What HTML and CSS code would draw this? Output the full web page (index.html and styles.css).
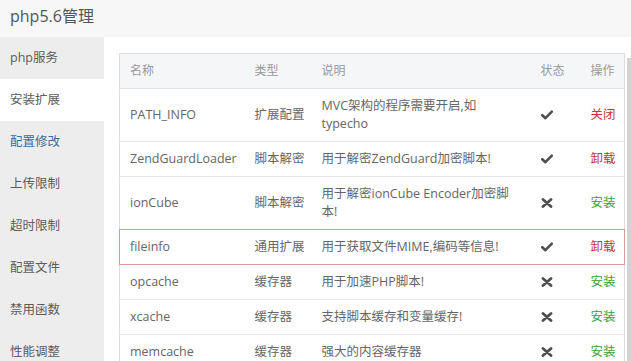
FILE: index.html
```html
<!DOCTYPE html>
<html lang="zh">
<head>
<meta charset="utf-8">
<title>php5.6管理</title>
<link rel="stylesheet" href="styles.css">
</head>
<body>
<div class="header">php5.6管理</div>
<div class="layout">
  <ul class="sidebar">
    <li>php服务</li>
    <li class="active">安装扩展</li>
    <li class="link">配置修改</li>
    <li>上传限制</li>
    <li>超时限制</li>
    <li>配置文件</li>
    <li>禁用函数</li>
    <li>性能调整</li>
  </ul>
  <div class="main">
    <table class="ext">
      <colgroup>
        <col class="c1"><col class="c2"><col class="c3"><col class="c4"><col class="c5">
      </colgroup>
      <thead>
        <tr><th>名称</th><th>类型</th><th>说明</th><th>状态</th><th>操作</th></tr>
      </thead>
      <tbody>
        <tr>
          <td>PATH_INFO</td><td>扩展配置</td><td class="desc">MVC架构的程序需要开启,如typecho</td>
          <td><svg class="ico" viewBox="0 0 12 10"><path d="M1.3 5.2 L4.4 8.2 L10.8 1.6" /></svg></td>
          <td class="red">关闭</td>
        </tr>
        <tr>
          <td>ZendGuardLoader</td><td>脚本解密</td><td class="desc">用于解密ZendGuard加密脚本!</td>
          <td><svg class="ico" viewBox="0 0 12 10"><path d="M1.3 5.2 L4.4 8.2 L10.8 1.6" /></svg></td>
          <td class="red">卸载</td>
        </tr>
        <tr class="before-hl">
          <td>ionCube</td><td>脚本解密</td><td class="desc">用于解密ionCube Encoder加密脚本!</td>
          <td><svg class="ico" viewBox="0 0 12 10"><path d="M2 1.5 L10 8.5 M10 1.5 L2 8.5" class="x" /></svg></td>
          <td class="green">安装</td>
        </tr>
        <tr class="hl">
          <td>fileinfo</td><td>通用扩展</td><td class="desc">用于获取文件MIME,编码等信息!</td>
          <td><svg class="ico" viewBox="0 0 12 10"><path d="M1.3 5.2 L4.4 8.2 L10.8 1.6" /></svg></td>
          <td class="red">卸载</td>
        </tr>
        <tr>
          <td>opcache</td><td>缓存器</td><td class="desc">用于加速PHP脚本!</td>
          <td><svg class="ico" viewBox="0 0 12 10"><path d="M2 1.5 L10 8.5 M10 1.5 L2 8.5" class="x" /></svg></td>
          <td class="green">安装</td>
        </tr>
        <tr>
          <td>xcache</td><td>缓存器</td><td class="desc">支持脚本缓存和变量缓存!</td>
          <td><svg class="ico" viewBox="0 0 12 10"><path d="M2 1.5 L10 8.5 M10 1.5 L2 8.5" class="x" /></svg></td>
          <td class="green">安装</td>
        </tr>
        <tr>
          <td>memcache</td><td>缓存器</td><td class="desc">强大的内容缓存器</td>
          <td><svg class="ico" viewBox="0 0 12 10"><path d="M2 1.5 L10 8.5 M10 1.5 L2 8.5" class="x" /></svg></td>
          <td class="green">安装</td>
        </tr>
      </tbody>
    </table>
    <div class="scrollbar"></div>
  </div>
</div>
</body>
</html>
```
FILE: styles.css
```css
html, body {
  margin: 0;
  padding: 0;
  background: #ffffff;
  overflow: hidden;
}
body {
  width: 631px;
  height: 361px;
  font-family: "Open Sans", "Noto Sans CJK SC", sans-serif;
  color: #555;
}
.header {
  height: 37px;
  line-height: 33px;
  padding-left: 10px;
  font-size: 16px;
  color: #555;
  background: #f7f7f7;
  box-sizing: border-box;
}
.layout {
  display: flex;
  height: 324px;
}
.sidebar {
  list-style: none;
  margin: 0;
  padding: 0;
  width: 104px;
  flex: none;
  background: #ededed;
}
.sidebar li {
  height: 42px;
  line-height: 42px;
  padding-left: 10px;
  font-size: 12.5px;
  color: #5c5c5c;
}
.sidebar li.active {
  background: #ffffff;
}
.sidebar li.link {
  color: #3a6d9c;
}
.main {
  flex: 1;
  display: flex;
  align-items: flex-start;
  padding: 16px 0 0 15px;
}
.ext {
  width: 505px;
  flex: none;
  table-layout: fixed;
  border-collapse: collapse;
  border: 1px solid #dcdcdc;
  font-size: 12.5px;
}
.c1 { width: 125px; }
.c2 { width: 67px; }
.c3 { width: 219px; }
.c4 { width: 50px; }
.c5 { width: 44px; }
.ext th {
  text-align: left;
  font-weight: normal;
  font-size: 12px;
  color: #9a9a9a;
  background: #f5f6f7;
  padding: 8px 10px;
  line-height: 18px;
  white-space: nowrap;
  border-bottom: 1px solid #e3e3e3;
}
.ext td {
  padding: 8px 10px;
  line-height: 18px;
  border-bottom: 1px solid #e6e6e6;
  vertical-align: middle;
  color: #666;
  white-space: nowrap;
}
.ext td.desc {
  white-space: normal;
  padding-right: 8px;
}
.ext tr.before-hl td {
  border-bottom: 1px solid #d49c9c;
}
.ext tr.hl td {
  border-bottom: 1px solid #d49c9c;
}
.ext tr.hl td:first-child {
  border-left: 1px solid #d49c9c;
}
.ext tr.hl td:last-child {
  border-right: 1px solid #d49c9c;
}
.ico {
  display: block;
  width: 12px;
  height: 10px;
}
.ico path {
  fill: none;
  stroke: #4e4e4e;
  stroke-width: 2.6;
  stroke-linecap: round;
  stroke-linejoin: round;
}
.ico path.x {
  stroke-width: 2.8;
}
.red {
  color: #cc3333 !important;
}
.green {
  color: #3a9e3a !important;
}
.scrollbar {
  width: 5px;
  height: 305px;
  margin: 5px 0 0 2px;
  background: #d3d3d3;
  flex: none;
}
```
